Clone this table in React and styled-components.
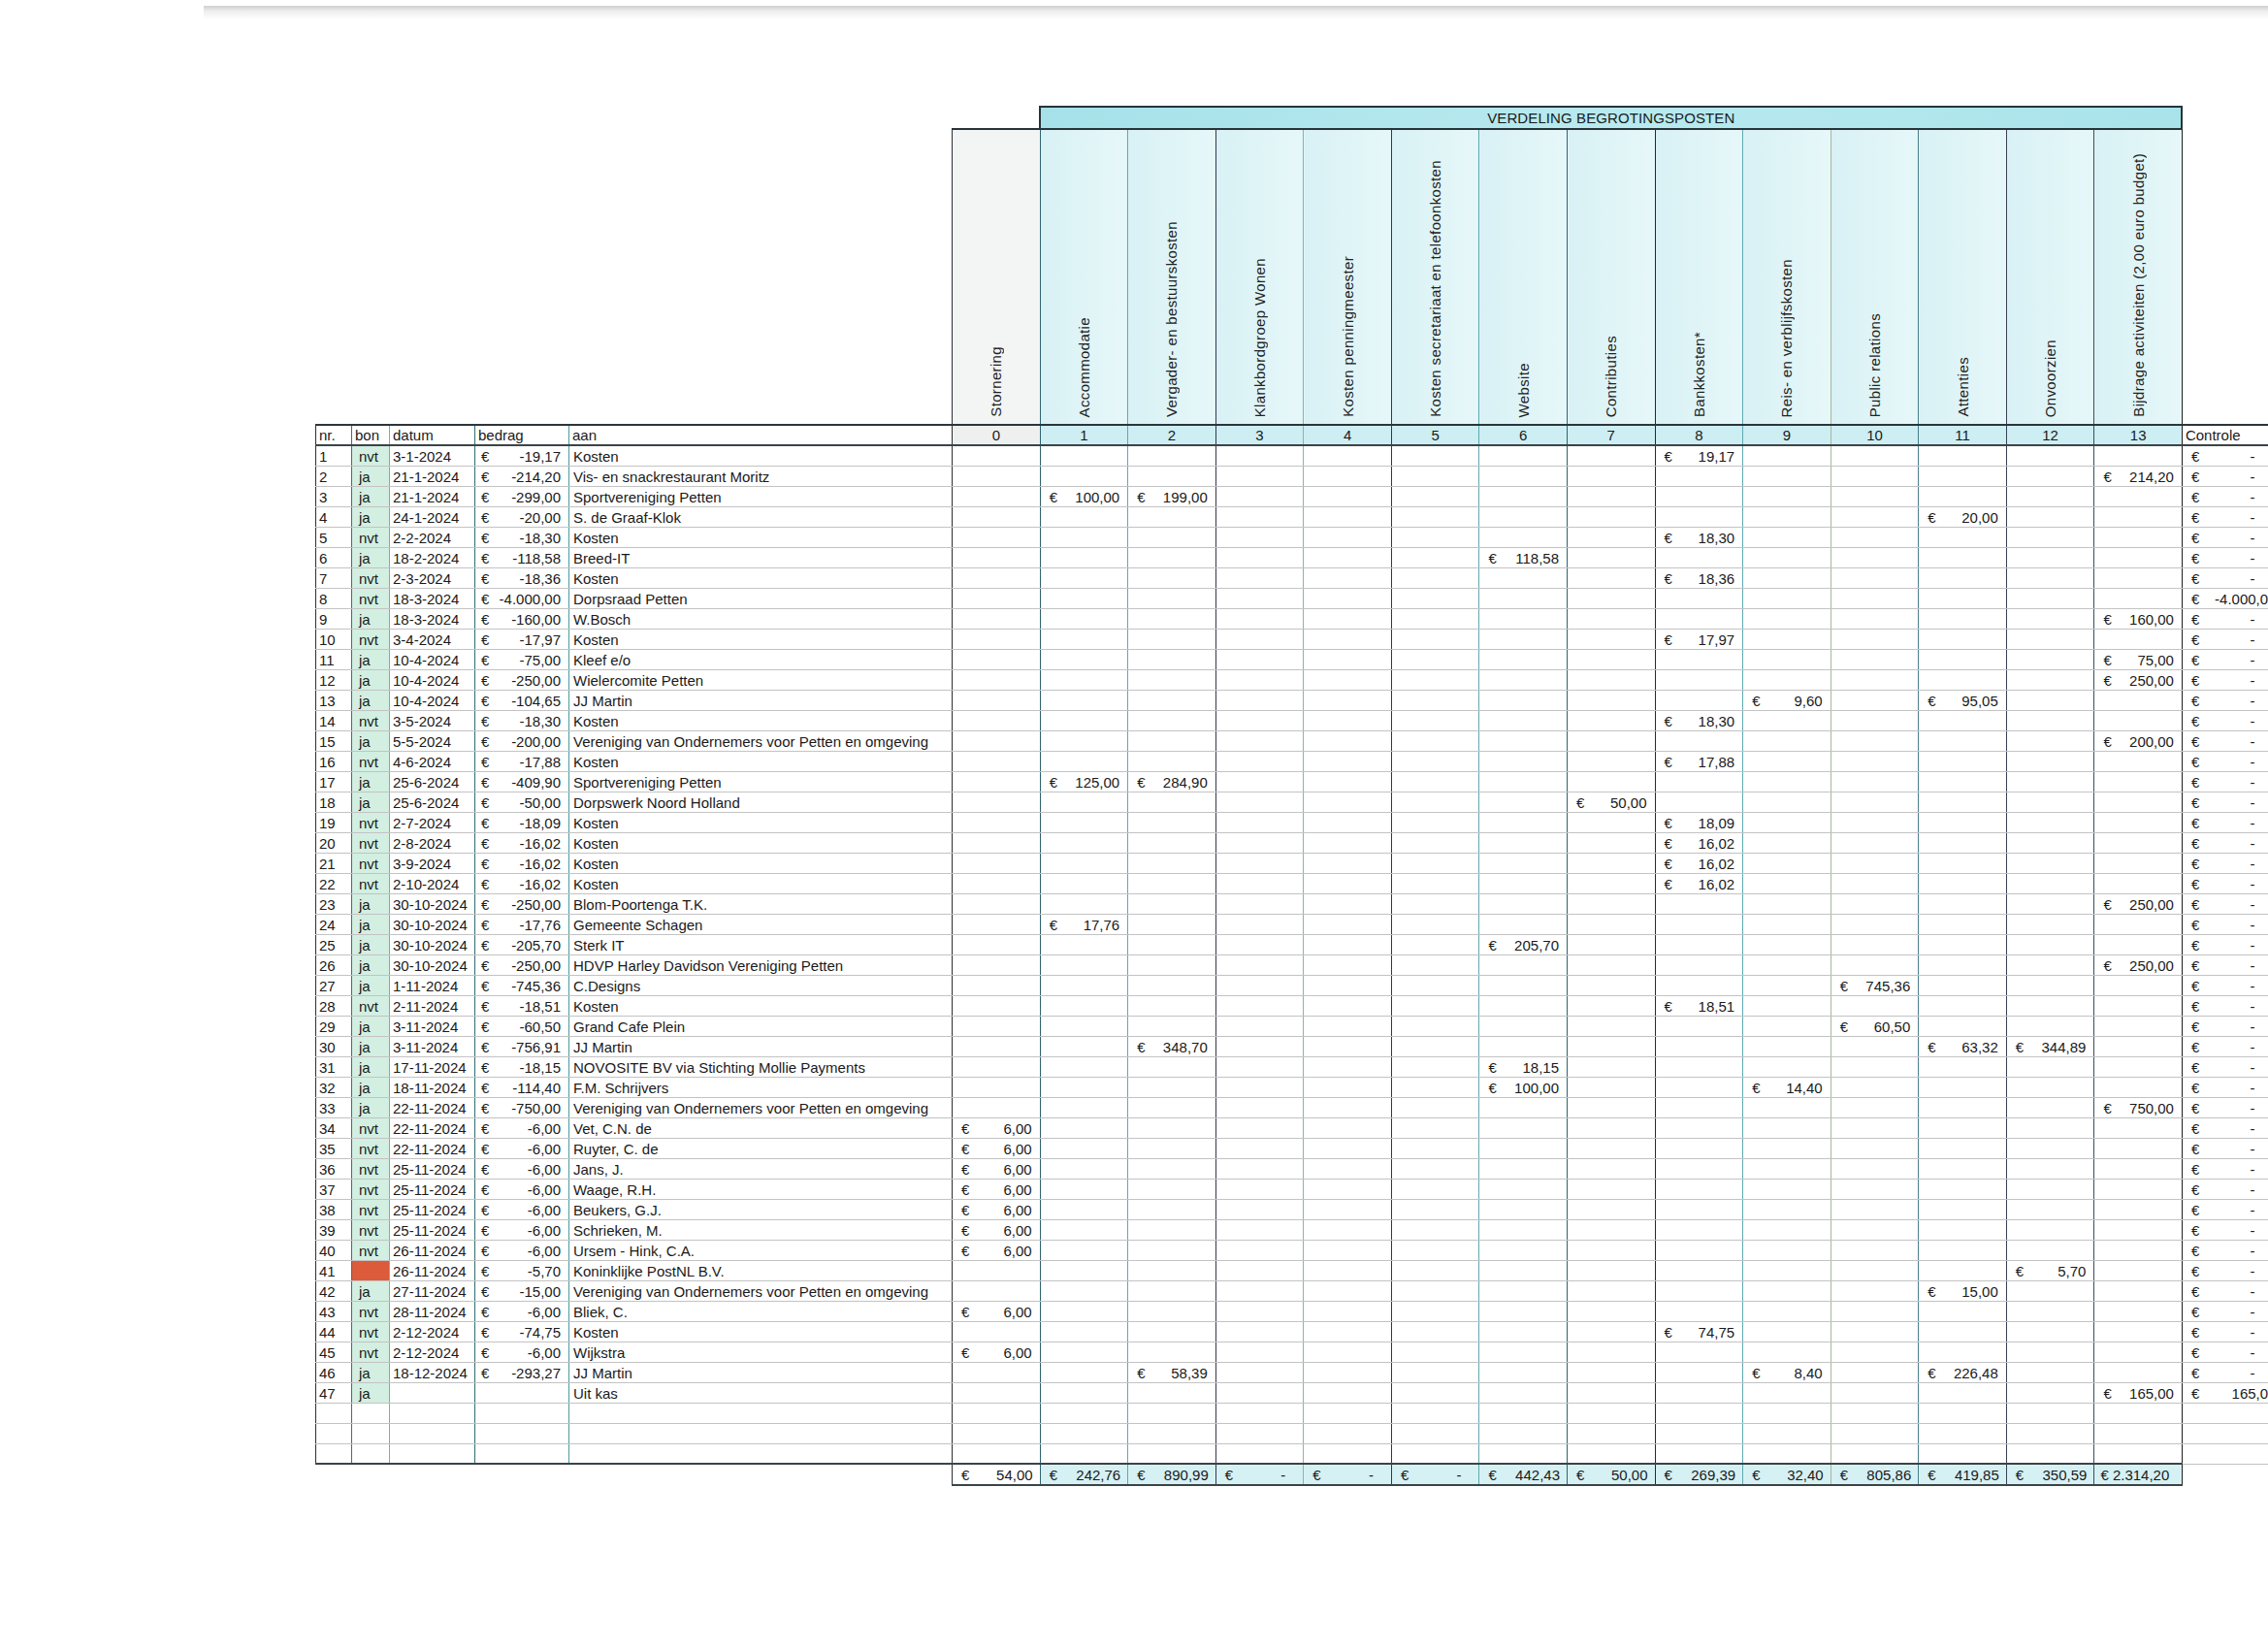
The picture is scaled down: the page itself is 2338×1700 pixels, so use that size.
import React from "react";
import styled, { createGlobalStyle } from "styled-components";

const GlobalStyle = createGlobalStyle`
    html, body {
        margin: 0;
        padding: 0;
        background: #ffffff;
        overflow: hidden;
    }
    body {
        font-family: "Liberation Sans", Arial, sans-serif;
        color: #1a1a1a;
    }
`;

const Page = styled.div`
    width: 2338px;
    height: 1700px;
    overflow: hidden;
    display: flex;
    flex-direction: column;
`;

const ScanEdge = styled.div`
    margin: 6px 0 0 210px;
    height: 14px;
    background: linear-gradient(to bottom, #cfcfcf, #eeeeee 40%, #ffffff);
`;

const Sheet = styled.table`
    margin: 89px 0 0 325px;
    border-collapse: collapse;
    table-layout: fixed;
    width: 2025px;
    font-size: 15px;
    line-height: 1;
`;

const BandRow = styled.tr`
    height: 23px;
`;

const Blank = styled.td`
    padding: 0;
    border: none;
`;

const Band = styled.td`
    padding: 0;
    border: 2px solid #26343a;
    background: linear-gradient(to right, #a6e1e9, #b9eaef 50%, #a9e3ea);
    text-align: center;
    vertical-align: middle;
    letter-spacing: 0.1px;
`;

const RotRow = styled.tr`
    height: 305px;
`;

const RotHead = styled.td`
    padding: 0 0 5px 0;
    border-top: 2px solid #26343a;
    border-right: 1px solid ${(p) => p.$line};
    border-left: ${(p) => (p.$first ? "1px solid #2a3036" : "none")};
    background: ${(p) =>
        p.$plain ? "#f3f4f4" : "linear-gradient(to right, #d8f1f4, #e6f7f9)"};
    vertical-align: bottom;
    text-align: center;
`;

const RotLabel = styled.span`
    display: inline-block;
    writing-mode: vertical-rl;
    transform: rotate(180deg);
    letter-spacing: 0.35px;
    white-space: nowrap;
    color: #222;
`;

const NumRow = styled.tr`
    height: 21px;
`;

const NumHead = styled.td`
    padding: 0 ${(p) => (p.$center ? "0" : "3px")};
    border-top: 2px solid #2c353a;
    border-bottom: 2px solid #3a4448;
    border-right: 1px solid ${(p) => p.$line || "#2f3a40"};
    border-left: ${(p) => (p.$first ? "1px solid #2a3036" : "none")};
    background: ${(p) => p.$bg || "#ffffff"};
    text-align: ${(p) => (p.$center ? "center" : "left")};
    vertical-align: bottom;
    padding-bottom: 2px;
    white-space: nowrap;
`;

const DataRow = styled.tr`
    height: 21px;
`;

const Cell = styled.td`
    padding: 0 0 2px ${(p) => p.$pad ?? 3}px;
    border-right: ${(p) => (p.$line ? `1px solid ${p.$line}` : "none")};
    border-left: ${(p) => (p.$first ? "1px solid #2a3036" : "none")};
    border-bottom: ${(p) => (p.$last ? "2px solid #3a4448" : "1px solid #c3c3c3")};
    background: ${(p) => p.$bg || "transparent"};
    vertical-align: bottom;
    white-space: nowrap;
    overflow: ${(p) => (p.$spill ? "visible" : "hidden")};
`;

const MoneyBox = styled.div`
    display: flex;
    justify-content: space-between;
    align-items: flex-end;
    padding: 0 ${(p) => p.$right ?? 8}px 0 ${(p) => p.$left ?? 6}px;
`;

const TotalRow = styled.tr`
    height: 22px;
`;

const TotalCell = styled.td`
    padding: 0 0 2px 0;
    border-top: 2px solid #3a4448;
    border-bottom: 2px solid #3a4448;
    border-right: 1px solid ${(p) => p.$line};
    border-left: ${(p) => (p.$first ? "1px solid #2a3036" : "none")};
    background: ${(p) => (p.$plain ? "#ffffff" : "#d6f1f4")};
    vertical-align: bottom;
    white-space: nowrap;
`;

const LEFT_COLS = [
    { key: "nr", w: 37, line: "#59646c" },
    { key: "bon", w: 39, line: "#72b3ae" },
    { key: "datum", w: 88, line: "#2f6f72" },
    { key: "bedrag", w: 97, line: "#4a9c9c" },
    { key: "aan", w: 395, line: "#2a2f33" },
];

const POSTS = [
    { label: "Stornering", line: "#2f6470" },
    { label: "Accommodatie", line: "#5fa8b2" },
    { label: "Vergader- en bestuurskosten", line: "#35384f" },
    { label: "Klankbordgroep Wonen", line: "#8fb4a2" },
    { label: "Kosten penningmeester", line: "#2e3a48" },
    { label: "Kosten secretariaat en telefoonkosten", line: "#5fa8b2" },
    { label: "Website", line: "#2f6470" },
    { label: "Contributies", line: "#2a2a2a" },
    { label: "Bankkosten*", line: "#5fa8b2" },
    { label: "Reis- en verblijfskosten", line: "#a8b79a" },
    { label: "Public relations", line: "#4a7f8c" },
    { label: "Attenties", line: "#3a3f55" },
    { label: "Onvoorzien", line: "#3a4f5a" },
    { label: "Bijdrage activiteiten (2,00 euro budget)", line: "#1e1e1e" },
];

const TOTALS = ["54,00", "242,76", "890,99", "-", "-", "-", "442,43", "50,00", "269,39", "32,40", "805,86", "419,85", "350,59", "2.314,20"];

const VO = "Vereniging van Ondernemers voor Petten en omgeving";

// nr, bon, datum, bedrag, aan, verdeling per post, controle
const ROWS = [
    ["1", "nvt", "3-1-2024", "-19,17", "Kosten", { 8: "19,17" }],
    ["2", "ja", "21-1-2024", "-214,20", "Vis- en snackrestaurant Moritz", { 13: "214,20" }],
    ["3", "ja", "21-1-2024", "-299,00", "Sportvereniging Petten", { 1: "100,00", 2: "199,00" }],
    ["4", "ja", "24-1-2024", "-20,00", "S. de Graaf-Klok", { 11: "20,00" }],
    ["5", "nvt", "2-2-2024", "-18,30", "Kosten", { 8: "18,30" }],
    ["6", "ja", "18-2-2024", "-118,58", "Breed-IT", { 6: "118,58" }],
    ["7", "nvt", "2-3-2024", "-18,36", "Kosten", { 8: "18,36" }],
    ["8", "nvt", "18-3-2024", "-4.000,00", "Dorpsraad Petten", {}, "-4.000,00"],
    ["9", "ja", "18-3-2024", "-160,00", "W.Bosch", { 13: "160,00" }],
    ["10", "nvt", "3-4-2024", "-17,97", "Kosten", { 8: "17,97" }],
    ["11", "ja", "10-4-2024", "-75,00", "Kleef e/o", { 13: "75,00" }],
    ["12", "ja", "10-4-2024", "-250,00", "Wielercomite Petten", { 13: "250,00" }],
    ["13", "ja", "10-4-2024", "-104,65", "JJ Martin", { 9: "9,60", 11: "95,05" }],
    ["14", "nvt", "3-5-2024", "-18,30", "Kosten", { 8: "18,30" }],
    ["15", "ja", "5-5-2024", "-200,00", VO, { 13: "200,00" }],
    ["16", "nvt", "4-6-2024", "-17,88", "Kosten", { 8: "17,88" }],
    ["17", "ja", "25-6-2024", "-409,90", "Sportvereniging Petten", { 1: "125,00", 2: "284,90" }],
    ["18", "ja", "25-6-2024", "-50,00", "Dorpswerk Noord Holland", { 7: "50,00" }],
    ["19", "nvt", "2-7-2024", "-18,09", "Kosten", { 8: "18,09" }],
    ["20", "nvt", "2-8-2024", "-16,02", "Kosten", { 8: "16,02" }],
    ["21", "nvt", "3-9-2024", "-16,02", "Kosten", { 8: "16,02" }],
    ["22", "nvt", "2-10-2024", "-16,02", "Kosten", { 8: "16,02" }],
    ["23", "ja", "30-10-2024", "-250,00", "Blom-Poortenga T.K.", { 13: "250,00" }],
    ["24", "ja", "30-10-2024", "-17,76", "Gemeente Schagen", { 1: "17,76" }],
    ["25", "ja", "30-10-2024", "-205,70", "Sterk IT", { 6: "205,70" }],
    ["26", "ja", "30-10-2024", "-250,00", "HDVP Harley Davidson Vereniging Petten", { 13: "250,00" }],
    ["27", "ja", "1-11-2024", "-745,36", "C.Designs", { 10: "745,36" }],
    ["28", "nvt", "2-11-2024", "-18,51", "Kosten", { 8: "18,51" }],
    ["29", "ja", "3-11-2024", "-60,50", "Grand Cafe Plein", { 10: "60,50" }],
    ["30", "ja", "3-11-2024", "-756,91", "JJ Martin", { 2: "348,70", 11: "63,32", 12: "344,89" }],
    ["31", "ja", "17-11-2024", "-18,15", "NOVOSITE BV via Stichting Mollie Payments", { 6: "18,15" }],
    ["32", "ja", "18-11-2024", "-114,40", "F.M. Schrijvers", { 6: "100,00", 9: "14,40" }],
    ["33", "ja", "22-11-2024", "-750,00", VO, { 13: "750,00" }],
    ["34", "nvt", "22-11-2024", "-6,00", "Vet, C.N. de", { 0: "6,00" }],
    ["35", "nvt", "22-11-2024", "-6,00", "Ruyter, C. de", { 0: "6,00" }],
    ["36", "nvt", "25-11-2024", "-6,00", "Jans, J.", { 0: "6,00" }],
    ["37", "nvt", "25-11-2024", "-6,00", "Waage, R.H.", { 0: "6,00" }],
    ["38", "nvt", "25-11-2024", "-6,00", "Beukers, G.J.", { 0: "6,00" }],
    ["39", "nvt", "25-11-2024", "-6,00", "Schrieken, M.", { 0: "6,00" }],
    ["40", "nvt", "26-11-2024", "-6,00", "Ursem - Hink, C.A.", { 0: "6,00" }],
    ["41", "", "26-11-2024", "-5,70", "Koninklijke PostNL B.V.", { 12: "5,70" }],
    ["42", "ja", "27-11-2024", "-15,00", VO, { 11: "15,00" }],
    ["43", "nvt", "28-11-2024", "-6,00", "Bliek, C.", { 0: "6,00" }],
    ["44", "nvt", "2-12-2024", "-74,75", "Kosten", { 8: "74,75" }],
    ["45", "nvt", "2-12-2024", "-6,00", "Wijkstra", { 0: "6,00" }],
    ["46", "ja", "18-12-2024", "-293,27", "JJ Martin", { 2: "58,39", 9: "8,40", 11: "226,48" }],
    ["47", "ja", "", "", "Uit kas", { 13: "165,00" }, "165,00"],
];

const EMPTY_ROWS = 3;

const Money = ({ value, left, right }) => (
    <MoneyBox $left={left} $right={right}>
        <span>€</span>
        <span>{value}</span>
    </MoneyBox>
);

const bonColor = (row) => {
    if (row === null) return "transparent";
    if (row[1] === "") return "#db5b3b";
    return "#d2efe2";
};

const DataLine = ({ row, last }) => {
    const alloc = row ? row[5] : {};
    const controle = row ? row[6] || "-" : null;
    return (
        <DataRow>
            <Cell $first $line={LEFT_COLS[0].line} $last={last}>{row && row[0]}</Cell>
            <Cell $line={LEFT_COLS[1].line} $pad={7} $bg={bonColor(row)} $last={last}>
                {row && row[1]}
            </Cell>
            <Cell $line={LEFT_COLS[2].line} $last={last}>{row && row[2]}</Cell>
            <Cell $line={LEFT_COLS[3].line} $pad={0} $last={last}>
                {row && row[3] && <Money value={row[3]} left={6} right={8} />}
            </Cell>
            <Cell $line={LEFT_COLS[4].line} $pad={4} $last={last}>{row && row[4]}</Cell>
            {POSTS.map((post, i) => (
                <Cell key={post.label} $line={post.line} $pad={0} $last={last}>
                    {alloc[i] && <Money value={alloc[i]} left={9} right={8} />}
                </Cell>
            ))}
            <Cell $pad={0} $spill>
                {controle && (
                    <Money value={controle} left={9} right={controle === "-" ? 26 : 4} />
                )}
            </Cell>
        </DataRow>
    );
};

const App = () => {
    const postWidth = 90.57;
    const lines = [...ROWS, ...Array.from({ length: EMPTY_ROWS }, () => null)];

    return (
        <Page>
            <GlobalStyle />
            <ScanEdge />
            <Sheet>
                <colgroup>
                    {LEFT_COLS.map((c) => (
                        <col key={c.key} style={{ width: c.w }} />
                    ))}
                    {POSTS.map((p) => (
                        <col key={p.label} style={{ width: postWidth }} />
                    ))}
                    <col style={{ width: 101 }} />
                </colgroup>
                <tbody>
                    <BandRow>
                        <Blank colSpan={6} />
                        <Band colSpan={13}>VERDELING BEGROTINGSPOSTEN</Band>
                        <Blank />
                    </BandRow>
                    <RotRow>
                        <Blank colSpan={5} />
                        {POSTS.map((post, i) => (
                            <RotHead key={post.label} $line={post.line} $plain={i === 0} $first={i === 0}>
                                <RotLabel>{post.label}</RotLabel>
                            </RotHead>
                        ))}
                        <Blank />
                    </RotRow>
                    <NumRow>
                        <NumHead $first $line={LEFT_COLS[0].line}>nr.</NumHead>
                        <NumHead $line={LEFT_COLS[1].line}>bon</NumHead>
                        <NumHead $line={LEFT_COLS[2].line}>datum</NumHead>
                        <NumHead $line={LEFT_COLS[3].line}>bedrag</NumHead>
                        <NumHead $line={LEFT_COLS[4].line}>aan</NumHead>
                        {POSTS.map((post, i) => (
                            <NumHead
                                key={post.label}
                                $center
                                $line={post.line}
                                $bg={i === 0 ? "#eef0f0" : "#cdeef2"}
                            >
                                {i}
                            </NumHead>
                        ))}
                        <NumHead $line="transparent">Controle</NumHead>
                    </NumRow>
                    {lines.map((row, i) => (
                        <DataLine key={i} row={row} last={i === lines.length - 1} />
                    ))}
                    <TotalRow>
                        <Blank colSpan={5} />
                        {TOTALS.map((t, i) => (
                            <TotalCell key={i} $line={POSTS[i].line} $plain={i === 0} $first={i === 0}>
                                {i === 13 ? (
                                    <MoneyBox $left={6} $right={8}>
                                        <span>€ {t}</span>
                                    </MoneyBox>
                                ) : (
                                    <Money value={t} left={9} right={t === "-" ? 18 : 7} />
                                )}
                            </TotalCell>
                        ))}
                        <Blank />
                    </TotalRow>
                </tbody>
            </Sheet>
        </Page>
    );
};

export default App;
